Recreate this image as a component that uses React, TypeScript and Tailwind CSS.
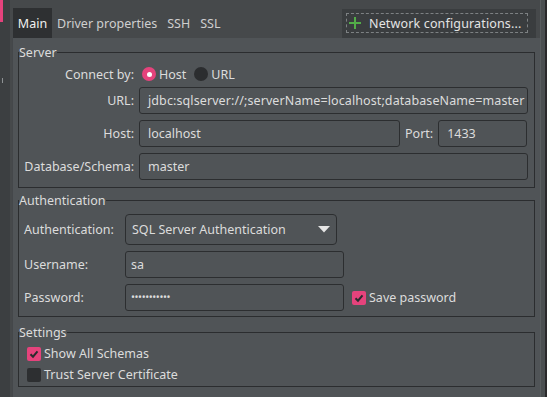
import React from "react";

function Input({ children, className = "" }: { children?: React.ReactNode; className?: string }) {
  return (
    <div
      className={
        "h-[27px] border border-[#2c2e30] rounded-[3px] flex items-center overflow-hidden whitespace-nowrap " +
        className
      }
    >
      {children}
    </div>
  );
}

function Check({ checked }: { checked: boolean }) {
  return checked ? (
    <div className="w-[14px] h-[14px] rounded-[2px] bg-[#e5437c] flex items-center justify-center shrink-0">
      <svg width="14" height="14" viewBox="0 0 14 14">
        <path d="M3.5 7.2 L6 9.7 L10.5 4.3" fill="none" stroke="#2a2c2e" strokeWidth="2" />
      </svg>
    </div>
  ) : (
    <div className="w-[14px] h-[14px] rounded-[2px] bg-[#2d2f31] shrink-0" />
  );
}

export default function App() {
  return (
    <div className="w-[547px] h-[397px] flex overflow-hidden bg-[#46494b] text-[12.5px] leading-[17px] text-[#dcdcdc] font-['Noto_Sans',sans-serif]">
      {/* left strip */}
      <div className="w-[10px] shrink-0 bg-[#3c3f41] flex flex-col">
        <div className="w-[3px] h-[22px] bg-[#e4427c]" />
        <div className="ml-[2px] mt-[56px] w-px h-[5px] bg-[#8e9294]" />
      </div>

      {/* middle */}
      <div className="w-[530px] shrink-0 flex flex-col">
        {/* tabs row */}
        <div className="h-[38px] shrink-0 pt-[8px] pl-[3px] pr-[4px] flex">
          <div className="w-[39px] bg-[#2e3032] text-[#f0f0f0] flex items-center justify-center">Main</div>
          <div className="flex items-center ml-[5px] text-[#cfcfcf] gap-[10px]">
            <span>Driver properties</span>
            <span>SSH</span>
            <span>SSL</span>
          </div>
          <div className="ml-auto mt-[1px] w-[194px] bg-[#3a3d3f] flex items-start pl-[4px] pt-[4px]">
            <div className="w-[182px] h-[20px] border border-dashed border-[#7d8183] flex items-center pl-[2px]">
              <svg width="12" height="12" viewBox="0 0 12 12" className="shrink-0">
                <path d="M6 0 V12 M0 6 H12" stroke="#52ad48" strokeWidth="2" />
              </svg>
              <span className="ml-[8px] text-[#e4e4e4] tracking-[0.15px]">Network configurations...</span>
            </div>
          </div>
        </div>

        {/* content */}
        <div className="flex-1 ml-[2px] border-l border-[#44474a] bg-[#505457] pt-[6px] px-[5px] flex flex-col">
          {/* Server */}
          <fieldset className="border border-[#2b2d2f] pb-[7px] pr-[5px]">
            <legend className="leading-[17px]">Server</legend>
            <div className="grid grid-cols-[115px_1fr] gap-x-[5px]">
              <div className="h-[20px] mt-[3px] flex items-center justify-end">Connect by:</div>
              <div className="h-[20px] mt-[3px] flex items-center pl-[3px]">
                <div className="w-[14px] h-[14px] rounded-full bg-[#e5437c] flex items-center justify-center">
                  <div className="w-[5px] h-[5px] rounded-full bg-white" />
                </div>
                <span className="ml-[3px]">Host</span>
                <div className="ml-[8px] w-[14px] h-[14px] rounded-full bg-[#2b2d2f]" />
                <span className="ml-[3px]">URL</span>
              </div>

              <div className="mt-[3px] h-[27px] flex items-center justify-end">URL:</div>
              <Input className="mt-[3px] w-[389px] pl-[8px] tracking-[0.1px]">jdbc:sqlserver://;serverName=localhost;databaseName=master</Input>

              <div className="mt-[6px] h-[27px] flex items-center justify-end">Host:</div>
              <div className="mt-[6px] flex items-center">
                <Input className="w-[261px] pl-[8px]">localhost</Input>
                <span className="ml-[5px] mr-[5px]">Port:</span>
                <Input className="w-[89px] pl-[8px]">1433</Input>
              </div>

              <div className="mt-[6px] h-[27px] flex items-center justify-end">Database/Schema:</div>
              <Input className="mt-[6px] w-[389px] pl-[8px]">master</Input>
            </div>
          </fieldset>

          {/* Authentication */}
          <fieldset className="mt-[4px] border border-[#2b2d2f] pb-[5px]">
            <legend className="leading-[17px]">Authentication</legend>
            <div className="grid grid-cols-[101px_1fr] pl-[5px]">
              <div className="mt-[5px] h-[31px] flex items-center">Authentication:</div>
              <div className="mt-[5px] w-[212px] h-[31px] border border-[#2c2e30] rounded-[4px] flex items-center pl-[6px] pr-[6px]">
                <span className="flex-1">SQL Server Authentication</span>
                <svg width="12" height="7" viewBox="0 0 12 7">
                  <path d="M0 0 H12 L6 6.5 Z" fill="#e6e6e6" />
                </svg>
              </div>

              <div className="mt-[6px] h-[27px] flex items-center">Username:</div>
              <Input className="mt-[6px] w-[219px] pl-[5px]">sa</Input>

              <div className="mt-[6px] h-[27px] flex items-center">Password:</div>
              <div className="mt-[6px] flex items-center">
                <Input className="w-[219px] pl-[5px] text-[10.5px] tracking-[-0.4px]">•••••••••••</Input>
                <div className="ml-[8px] flex items-center">
                  <Check checked />
                  <span className="ml-[3px]">Save password</span>
                </div>
              </div>
            </div>
          </fieldset>

          {/* Settings */}
          <fieldset className="mt-[7px] border border-[#2b2d2f] pb-[1px] pl-[8px]">
            <legend className="leading-[17px] -ml-[8px]">Settings</legend>
            <div className="mt-[2px] h-[21px] flex items-center">
              <Check checked />
              <span className="ml-[3px]">Show All Schemas</span>
            </div>
            <div className="h-[21px] flex items-center">
              <Check checked={false} />
              <span className="ml-[3px]">Trust Server Certificate</span>
            </div>
          </fieldset>
        </div>
      </div>

      {/* right strip */}
      <div className="w-[7px] shrink-0 flex">
        <div className="w-px bg-[#595d5f]" />
        <div className="w-[4px] bg-[#4b4f51]" />
        <div className="w-[2px] bg-[#2a2a2b]" />
      </div>
    </div>
  );
}
